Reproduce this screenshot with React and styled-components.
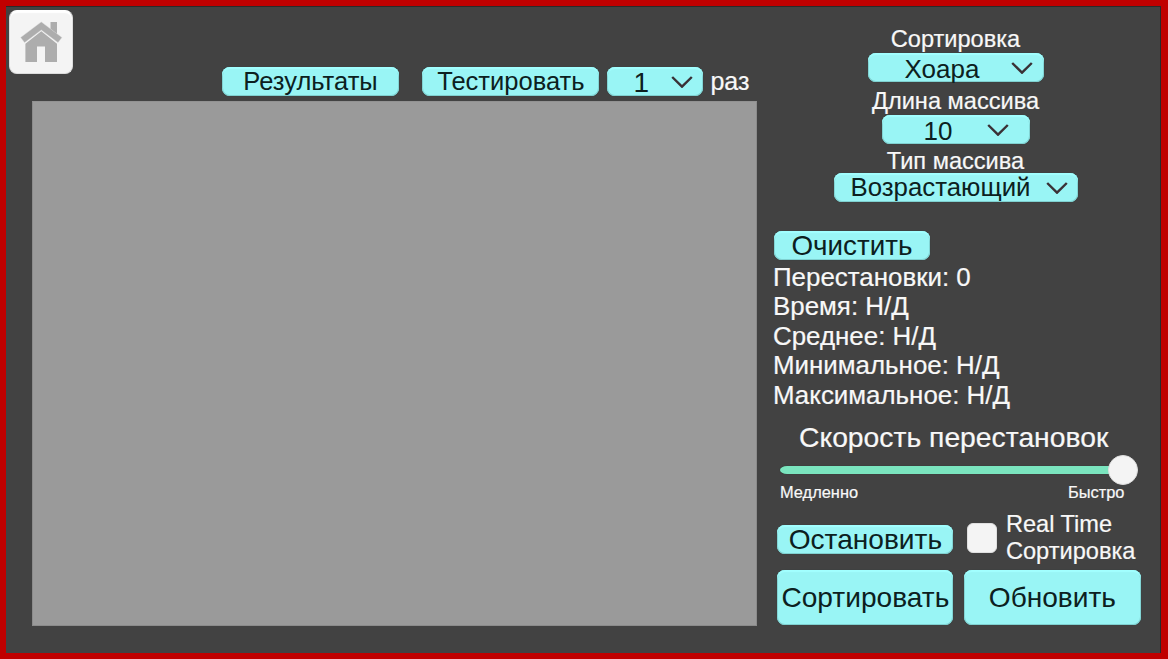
import React from "react";
import styled, { createGlobalStyle } from "styled-components";

const Global = createGlobalStyle`
  *, *::before, *::after { box-sizing: border-box; }
  html, body { margin: 0; padding: 0; background: #c00000; }
  body { font-family: "Liberation Sans", Arial, sans-serif; }
  button { font-family: inherit; margin: 0; }
`;

const Frame = styled.div`
  width: 1168px;
  height: 659px;
  padding: 6px 7px 6px 6px;
  background: #c00000;
  overflow: hidden;
`;

const Screen = styled.main`
  display: flex;
  width: 100%;
  height: 100%;
  background: #424242;
  box-shadow: inset -1px 1px 0 #2a2a2a;
  color: #f8f8f8;
  -webkit-text-stroke: 0.2px #f8f8f8;
`;

const Workspace = styled.section`
  display: flex;
  flex-direction: column;
  width: 751px;
`;

const Toolbar = styled.header`
  display: flex;
  align-items: flex-end;
  height: 94.5px;
  padding: 4px 0 4.5px 3px;
`;

const HomeButton = styled.button`
  display: flex;
  align-self: flex-start;
  width: 64px;
  height: 64px;
  margin-right: 149px;
  padding: 0;
  border: 1px solid #dcdcdc;
  border-top-color: #fff;
  border-radius: 8px;
  background: #f4f4f4;
  box-shadow: inset 0 2px 1px #fff;
`;

const Button = styled.button`
  display: flex;
  align-items: center;
  justify-content: center;
  flex: none;
  width: ${(p) => p.$width}px;
  height: ${(p) => p.$height || 29}px;
  margin-left: ${(p) => p.$gap || 0}px;
  padding: ${(p) => p.$drop || 0}px 0 0;
  border: 0;
  border-radius: 8px;
  background: #99f5f5;
  box-shadow: inset 0 2px 1px #a2ffff, inset 0 0 0 1px #7fd0d0, 0 0 1px #2c4444;
  color: #0c2020;
  font-size: ${(p) => p.$size || 28.1}px;
  line-height: 1;
  white-space: nowrap;
  -webkit-text-stroke: 0;
`;

const Dropdown = styled(Button)`
  justify-content: space-between;
  padding: 0 ${(p) => p.$right}px 0 ${(p) => p.$left}px;
`;

const Value = styled.span`
  padding-top: ${(p) => p.$drop || 0}px;
`;

const Suffix = styled.span`
  margin-left: 7px;
  font-size: 25px;
  line-height: 29px;
`;

const Canvas = styled.div`
  width: 725px;
  height: 525.5px;
  margin-left: 26px;
  background: #9a9a9a;
  border: 1px solid #8b8b8b;
  border-top-color: #929292;
`;

const Controls = styled.aside`
  display: flex;
  flex-direction: column;
  width: 404px;
  padding: 18px 20px 0 17px;
`;

const Options = styled.div`
  display: flex;
  flex-direction: column;
  align-items: center;
  height: 206.5px;
  padding-right: 4px;
`;

const OptionLabel = styled.label`
  display: flex;
  align-items: center;
  height: ${(p) => p.$height}px;
  padding-top: ${(p) => p.$drop || 0}px;
  font-size: 23.6px;
  line-height: 1;
`;

const Stats = styled.ul`
  height: 152px;
  margin: 0 0 0 -1px;
  padding: 3px 0 0;
  list-style: none;
  font-size: 25.9px;
  line-height: 29.6px;
  white-space: nowrap;
`;

const Speed = styled.div`
  height: 99.5px;
  padding: 11.5px 0 0 6px;
`;

const SpeedTitle = styled.h2`
  margin: 0 0 0 19px;
  font-size: 28.3px;
  font-weight: 400;
  line-height: 28px;
  white-space: nowrap;
`;

const Slider = styled.div`
  display: flex;
  align-items: center;
  height: 31px;
  margin-top: 3.5px;
`;

const Track = styled.div`
  width: 330px;
  height: 8px;
  border-radius: 7px 0 0 7px / 4px 0 0 4px;
  background: #7be5bf;
  box-shadow: 0 0 1px #1f3a30;
`;

const Knob = styled.div`
  width: 30px;
  height: 30px;
  margin-left: -2px;
  border-radius: 50%;
  border: 1px solid #dedede;
  background: #f4f4f4;
`;

const Range = styled.div`
  display: flex;
  justify-content: space-between;
  width: 344.5px;
  font-size: 16.4px;
  line-height: 13px;
`;

const Actions = styled.div`
  display: grid;
  grid-template-columns: 176px 177px;
  grid-template-rows: 59px 55px;
  column-gap: 10.5px;
  padding-left: 3.4px;
`;

const StopCell = styled.div`
  padding-top: 13.5px;
`;

const Toggle = styled.label`
  display: flex;
  padding-left: 3px;
  font-size: 23.6px;
  line-height: 27.2px;
  white-space: nowrap;
`;

const Check = styled.span`
  width: 30px;
  height: 30px;
  margin: 12px 9px 0 0;
  border: 1px solid #dfdfdf;
  border-radius: 6px;
  background: #f4f4f4;
`;

const HomeIcon = () => (
  <svg width="62" height="62" viewBox="10 11 62 62" aria-hidden="true">
    <g fill="#adadad">
      <path d="M50.5 22H57v12l-6.5-5z" />
      <path d="M41.3 31.2 57 43.7V61.9H45V46.5h-8v15.4H25.4V43.7z" />
      <path
        d="M41.3 21.9 61.9 37.4 58 42.6 41.3 29.9 24.6 42.6 20.7 37.4z"
        stroke="#d4d4d4"
        strokeWidth="0.4"
      />
    </g>
  </svg>
);

const Chevron = () => (
  <svg width="22" height="13" viewBox="0 0 22 13" fill="none" aria-hidden="true">
    <path d="M1.2 2 11 11.7 20.8 2" stroke="#3a3136" strokeWidth="2.4" />
  </svg>
);

const Select = ({ value, drop, ...rest }) => (
  <Dropdown {...rest}>
    <Value $drop={drop}>{value}</Value>
    <Chevron />
  </Dropdown>
);

const stats = [
  "Перестановки: 0",
  "Время: Н/Д",
  "Среднее: Н/Д",
  "Минимальное: Н/Д",
  "Максимальное: Н/Д",
];

export default function App() {
  return (
    <>
      <Global />
      <Frame>
        <Screen>
          <Workspace>
            <Toolbar>
              <HomeButton aria-label="Home">
                <HomeIcon />
              </HomeButton>
              <Button $width={177} $size={25.5} $drop={1}>Результаты</Button>
              <Button $width={177} $size={25.5} $drop={1} $gap={23.4}>Тестировать</Button>
              <Select $width={96} $size={28} $gap={8} $left={26} $right={10.5} value="1" drop={2} />
              <Suffix>раз</Suffix>
            </Toolbar>
            <Canvas />
          </Workspace>
          <Controls>
            <Options>
              <OptionLabel $height={29} $drop={2}>Сортировка</OptionLabel>
              <Select $width={176} $size={26} $left={37} $right={10.5} value="Хоара" drop={3} />
              <OptionLabel $height={33} $drop={6}>Длина массива</OptionLabel>
              <Select $width={148} $size={26} $left={42} $right={20.5} value="10" drop={3} />
              <OptionLabel $height={29} $drop={6}>Тип массива</OptionLabel>
              <Select $width={244} $size={25.8} $left={17} $right={9.5} value="Возрастающий" />
            </Options>
            <Button $width={156} $size={27.8} $drop={1}>Очистить</Button>
            <Stats>
              {stats.map((line) => (
                <li key={line}>{line}</li>
              ))}
            </Stats>
            <Speed>
              <SpeedTitle>Скорость перестановок</SpeedTitle>
              <Slider>
                <Track />
                <Knob />
              </Slider>
              <Range>
                <span>Медленно</span>
                <span>Быстро</span>
              </Range>
            </Speed>
            <Actions>
              <StopCell>
                <Button $width={176} $drop={2}>Остановить</Button>
              </StopCell>
              <Toggle>
                <Check />
                <span>
                  Real Time
                  <br />
                  Сортировка
                </span>
              </Toggle>
              <Button $width={176} $height={55} $drop={2}>Сортировать</Button>
              <Button $width={177} $height={55} $drop={2}>Обновить</Button>
            </Actions>
          </Controls>
        </Screen>
      </Frame>
    </>
  );
}
